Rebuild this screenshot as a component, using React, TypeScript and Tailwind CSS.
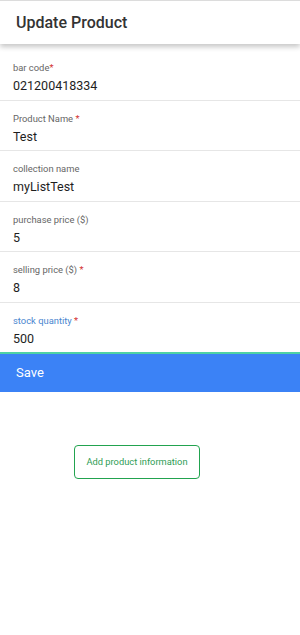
import React from "react";

type Field = { label: string; value: string; required?: boolean; active?: boolean; reqTight?: boolean };

const fields: Field[] = [
  { label: "bar code", value: "021200418334", required: true, reqTight: true },
  { label: "Product Name", value: "Test", required: true },
  { label: "collection name", value: "myListTest" },
  { label: "purchase price ($)", value: "5" },
  { label: "selling price ($)", value: "8", required: true },
  { label: "stock quantity", value: "500", required: true, active: true },
];

export default function App() {
  return (
    <div className="w-[300px] h-[635px] bg-white flex flex-col" style={{ fontFamily: "Roboto, 'Noto Sans', sans-serif" }}>
      <div className="h-[44px] border-t border-[#dcdcdc] bg-white flex items-center pl-[16px] shadow-[0_3px_5px_rgba(0,0,0,0.22)] relative z-10">
        <span className="text-[16px] font-medium text-[#333]">Update Product</span>
      </div>
      <div className="h-[6px]" />
      {fields.map((f) => (
        <div
          key={f.label}
          className={
            f.active
              ? "h-[50.6px] border-b-2 border-[#4fd1a5] pl-[13px] pt-[12px] flex flex-col"
              : "h-[50.6px] border-b border-[#e6e6e6] pl-[13px] pt-[12px] flex flex-col"
          }
        >
          <div className={f.active ? "text-[9.4px] leading-[12px] text-[#4a86cf]" : "text-[9.4px] leading-[12px] text-[#666]"}>
            {f.label}
            {f.required && <span className="text-[#d32f2f]">{f.reqTight ? "*" : " *"}</span>}
          </div>
          <div className="mt-[4px] text-[12.5px] leading-[16px] text-[#1e1e1e]">{f.value}</div>
        </div>
      ))}
      <div className="h-[38px] bg-[#3b82f6] flex items-center pl-[16px]">
        <span className="text-[13px] text-white">Save</span>
      </div>
      <div className="pt-[53px] pl-[74px]">
        <div className="w-[126px] h-[34px] border border-[#22a34f] rounded-[4px] flex items-center justify-center">
          <span className="text-[9.3px] text-[#2e9d55]">Add product information</span>
        </div>
      </div>
    </div>
  );
}
